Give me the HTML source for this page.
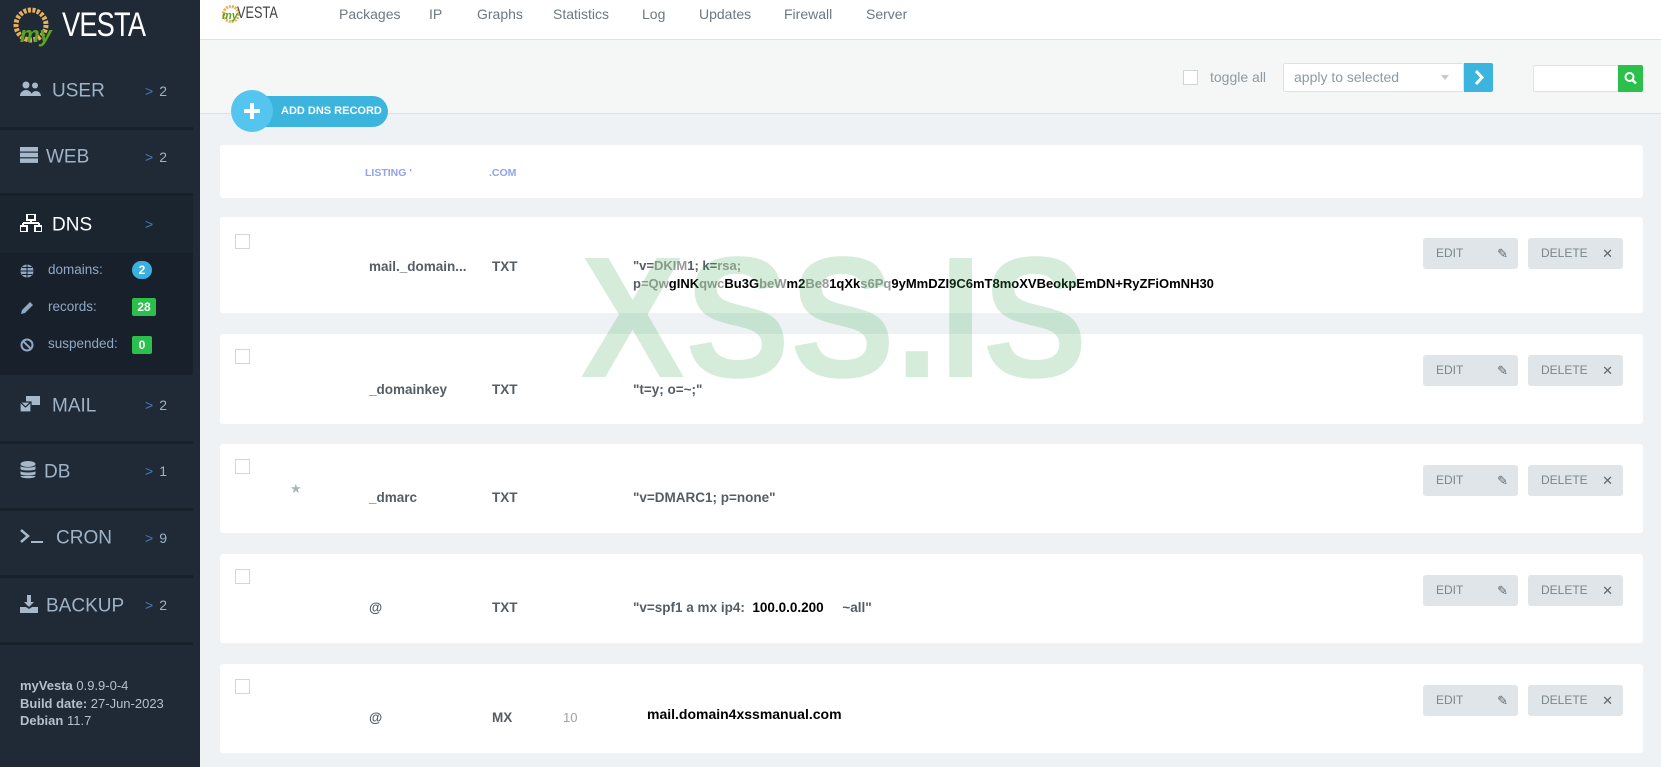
<!DOCTYPE html>
<html><head><meta charset="utf-8"><style>
*{box-sizing:border-box;margin:0;padding:0}
body{width:1661px;height:767px;overflow:hidden;background:#eef2f5;font-family:"Liberation Sans",sans-serif;position:relative}
.a{position:absolute}
#sb{left:0;top:0;width:200px;height:767px;background:#1f2a36}
.sep{position:absolute;left:0;width:193px;height:3px;background:#18212a}
.mi{position:absolute;left:20px;color:#9fb3c6;font-size:19px;line-height:20px;white-space:nowrap}
.mi .ic{display:inline-block;width:24px;margin-right:8px;vertical-align:middle}
.cnt{position:absolute;left:145px;color:#9fb3c6;font-size:14px}
.cnt b{color:#4a7bb0;font-weight:normal;margin-right:6px}
.sub{position:absolute;left:20px;color:#8fa8c4;font-size:13.5px}
.badge{position:absolute;left:132px;color:#fff;font-weight:bold;font-size:12px;text-align:center;line-height:18px;height:18px}
#top{left:200px;top:0;width:1461px;height:40px;background:#fff;border-bottom:1px solid #dde3e6}
.nav{position:absolute;top:6px;font-size:14px;color:#6d7880}
#tb{left:200px;top:40px;width:1461px;height:74px;background:#f5f7f7;border-bottom:1px solid #dce3e7}
.card{position:absolute;left:220px;width:1423px;background:#fff;border-radius:3px}
.cb{position:absolute;left:15px;top:8px;width:15px;height:15px;border:1px solid #d3d6d8;background:#fff}
.t{position:absolute;font-weight:bold;font-size:13.5px;color:#555d63;white-space:nowrap}
.btn{position:absolute;height:31px;background:#dfe5e8;border-radius:3px;font-size:12px;color:#7b868d;line-height:31px;padding-left:13px}
.btn span{position:absolute;right:10px;top:0;color:#5f686e;font-size:13px}
</style></head><body>
<div id="sb" class="a">
 <svg class="a" style="left:12px;top:6px" width="50" height="40" viewBox="0 0 50 40"><circle cx="19" cy="19" r="15" fill="none" stroke="#e7b15a" stroke-width="5" stroke-dasharray="3 1.5"/></svg>
 <div class="a" style="left:20px;top:22px;color:#5aa520;font-size:22px;font-style:italic;font-weight:bold">my</div>
 <div class="a" style="left:62px;top:6px;color:#fff;font-size:34px;letter-spacing:-1px;transform:scaleX(0.8);transform-origin:left">VESTA</div>

 <div class="mi" style="top:81px"><span class="ic"><svg width="22" height="16" viewBox="0 0 22 16"><circle cx="6" cy="4" r="3.5" fill="#a6b8c9"/><circle cx="15" cy="4.5" r="3" fill="#a6b8c9"/><path d="M0 15a6 6 0 0 1 12 0zM11 15a5 5 0 0 1 10 0z" fill="#a6b8c9"/></svg></span>USER</div><div class="cnt" style="top:83px"><b>&gt;</b>2</div>
 <div class="sep" style="top:127px"></div>
 <div class="mi" style="top:147px"><span class="ic" style="width:18px;margin-right:8px"><svg width="18" height="16" viewBox="0 0 18 16"><rect y="0" width="18" height="4.5" fill="#a6b8c9"/><rect y="5.7" width="18" height="4.5" fill="#a6b8c9"/><rect y="11.4" width="18" height="4.5" fill="#a6b8c9"/></svg></span>WEB</div><div class="cnt" style="top:149px"><b>&gt;</b>2</div>
 <div class="sep" style="top:193px"></div>
 <div class="a" style="left:0;top:196px;width:193px;height:57px;background:#1b2530"></div>
 <div class="a" style="left:0;top:253px;width:193px;height:122px;background:#18212b"></div>
 <div class="mi" style="top:214px;color:#fff"><span class="ic"><svg width="22" height="18" viewBox="0 0 22 18"><rect x="7" y="0" width="8" height="6" fill="none" stroke="#fff" stroke-width="2"/><path d="M11 6v3M3 9h16M3 9v3M19 9v3" stroke="#fff" stroke-width="2"/><rect x="0" y="12" width="7" height="6" fill="none" stroke="#fff" stroke-width="2"/><rect x="15" y="12" width="7" height="6" fill="none" stroke="#fff" stroke-width="2"/></svg></span>DNS</div><div class="cnt" style="top:216px"><b>&gt;</b></div>
 <svg class="a" style="left:20px;top:264px" width="14" height="14" viewBox="0 0 14 14"><circle cx="7" cy="7" r="6.5" fill="#8fa8c4"/><path d="M0.5 7h13M7 0.5v13M2 3.5h10M2 10.5h10" stroke="#18212b" stroke-width="1"/></svg>
 <div class="sub" style="left:48px;top:262px">domains:</div>
 <div class="badge" style="top:261px;width:20px;border-radius:10px;background:#3ab0e0">2</div>
 <svg class="a" style="left:20px;top:301px" width="14" height="14" viewBox="0 0 14 14"><path d="M1 13l1-4 8-8 3 3-8 8z" fill="#8fa8c4"/></svg>
 <div class="sub" style="left:48px;top:299px">records:</div>
 <div class="badge" style="top:298px;width:24px;border-radius:2px;background:#2bbf4c">28</div>
 <svg class="a" style="left:20px;top:338px" width="14" height="14" viewBox="0 0 14 14"><circle cx="7" cy="7" r="5.5" fill="none" stroke="#8fa8c4" stroke-width="2"/><path d="M3 3l8 8" stroke="#8fa8c4" stroke-width="2"/></svg>
 <div class="sub" style="left:48px;top:336px">suspended:</div>
 <div class="badge" style="top:336px;width:20px;border-radius:2px;background:#2bbf4c">0</div>
 <div class="mi" style="top:395px"><span class="ic"><svg width="20" height="18" viewBox="0 0 20 18"><rect x="6" y="1" width="14" height="9" fill="#a6b8c9"/><rect x="0" y="7" width="11" height="10" fill="#a6b8c9" stroke="#1f2a36" stroke-width="1.2"/><path d="M0 7l5.5 5 5.5-5" stroke="#1f2a36" fill="none" stroke-width="1.2"/></svg></span>MAIL</div><div class="cnt" style="top:397px"><b>&gt;</b>2</div>
 <div class="sep" style="top:441px"></div>
 <div class="mi" style="top:461px"><span class="ic" style="width:16px"><svg width="16" height="18" viewBox="0 0 16 18"><ellipse cx="8" cy="3" rx="7.5" ry="3" fill="#a6b8c9"/><path d="M0.5 5v3c0 2 15 2 15 0V5c0 2-15 2-15 0zM0.5 10v3c0 2 15 2 15 0v-3c0 2-15 2-15 0zM0.5 15c0 3 15 3 15 0" fill="#a6b8c9"/></svg></span>DB</div><div class="cnt" style="top:463px"><b>&gt;</b>1</div>
 <div class="sep" style="top:508px"></div>
 <div class="mi" style="top:528px"><span class="ic" style="margin-right:12px"><svg width="24" height="16" viewBox="0 0 24 16"><path d="M1 2l7 6-7 6" stroke="#a6b8c9" stroke-width="2.5" fill="none"/><path d="M11 14h12" stroke="#a6b8c9" stroke-width="2"/></svg></span>CRON</div><div class="cnt" style="top:530px"><b>&gt;</b>9</div>
 <div class="sep" style="top:575px"></div>
 <div class="mi" style="top:595px"><span class="ic" style="width:18px"><svg width="18" height="18" viewBox="0 0 18 18"><path d="M7 0h4v7h3l-5 5-5-5h3z" fill="#a6b8c9"/><path d="M0 12h6l3 2 3-2h6v6H0z" fill="#a6b8c9"/></svg></span>BACKUP</div><div class="cnt" style="top:597px"><b>&gt;</b>2</div>
 <div class="sep" style="top:642px"></div>
 <div class="a" style="left:20px;top:677px;color:#b3c0cb;font-size:13px;line-height:17.5px"><b>myVesta</b> 0.9.9-0-4<br><b>Build date:</b> 27-Jun-2023<br><b>Debian</b> 11.7</div>
</div>

<div id="top" class="a">
 <svg class="a" style="left:21px;top:4px" width="22" height="22" viewBox="0 0 22 22"><circle cx="10" cy="10" r="7.5" fill="none" stroke="#e7b15a" stroke-width="3" stroke-dasharray="2 1"/></svg>
 <div class="a" style="left:22px;top:10px;color:#5aa520;font-size:11px;font-style:italic;font-weight:bold">my</div>
 <div class="a" style="left:37px;top:3px;color:#444;font-size:17px;transform:scaleX(0.75);transform-origin:left">VESTA</div>
 <div class="nav" style="left:139px">Packages</div>
 <div class="nav" style="left:229px">IP</div>
 <div class="nav" style="left:277px">Graphs</div>
 <div class="nav" style="left:353px">Statistics</div>
 <div class="nav" style="left:442px">Log</div>
 <div class="nav" style="left:499px">Updates</div>
 <div class="nav" style="left:584px">Firewall</div>
 <div class="nav" style="left:666px">Server</div>
</div>
<div id="tb" class="a"></div>
<div class="a" style="left:1183px;top:70px;width:15px;height:15px;border:1px solid #cfd4d7;background:#fff"></div>
<div class="a" style="left:1210px;top:69px;font-size:14px;color:#8d9aa2">toggle all</div>
<div class="a" style="left:1283px;top:63px;width:181px;height:29px;background:#fff;border:1px solid #dde2e5;border-radius:2px;font-size:14px;color:#8d9aa2;padding:5px 10px">apply to selected<span style="position:absolute;right:14px;top:11px;border:4px solid transparent;border-top:5px solid #c5cacd"></span></div>
<div class="a" style="left:1464px;top:63px;width:29px;height:29px;background:#3bb4de;border-radius:0 2px 2px 0"><svg width="29" height="29" viewBox="0 0 29 29"><path d="M12 8l6 6.5-6 6.5" stroke="#fff" stroke-width="3" fill="none"/></svg></div>
<div class="a" style="left:1533px;top:65px;width:86px;height:27px;background:#fff;border:1px solid #dde2e5;border-radius:2px"></div>
<div class="a" style="left:1618px;top:65px;width:25px;height:27px;background:#2bbf4c;border-radius:0 2px 2px 0"><svg width="25" height="27" viewBox="0 0 25 27"><circle cx="11.5" cy="12" r="4" fill="none" stroke="#fff" stroke-width="2"/><path d="M14.5 15l3.5 3.5" stroke="#fff" stroke-width="2.5"/></svg></div>

<div class="a" style="left:246px;top:96px;width:142px;height:31px;background:#3bb4de;border-radius:16px"></div>
<div class="a" style="left:231px;top:90px;width:42px;height:42px;background:#53c5ee;border-radius:50%"><svg width="42" height="42" viewBox="0 0 42 42"><path d="M21 13v16M13 21h16" stroke="#fff" stroke-width="4"/></svg></div>
<div class="a" style="left:281px;top:105px;color:#fff;font-weight:bold;font-size:11px">ADD DNS RECORD</div>

<div class="card" style="top:145px;height:53px">
 <div class="t" style="left:145px;top:22px;color:#8fa3ea;font-size:10.5px">LISTING '</div>
 <div class="t" style="left:269px;top:22px;color:#8fa3ea;font-size:10.5px">.COM</div>
</div>

<div class="card" style="top:217px;height:96px">
 <div class="cb" style="top:17px"></div>
 <div class="t" style="left:149px;top:42px">mail._domain...</div>
 <div class="t" style="left:272px;top:42px">TXT</div>
 <div class="t" style="left:413px;top:41px;font-size:13px">"v=<span style="color:#999">DKIM</span>1; k=<span style="color:#999">rsa;</span></div>
 <div class="t" style="left:413px;top:59px;font-size:13px;color:#000"><span style="color:#555d63">p</span><span style="color:#999">=Qw</span>gINK<span style="color:#999">qwc</span>Bu3G<span style="color:#999">beW</span>m2<span style="color:#999">Be8</span>1qXk<span style="color:#999">s6Pq</span>9yMmDZI9C6mT8moXVBeokpEmDN+RyZFiOmNH30</div>
 <div class="btn" style="left:1203px;top:21px;width:95px">EDIT<span>&#9998;</span></div>
 <div class="btn" style="left:1308px;top:21px;width:95px">DELETE<span>&#10005;</span></div>
</div>
<div class="card" style="top:334px;height:90px">
 <div class="cb" style="top:15px"></div>
 <div class="t" style="left:149px;top:48px">_domainkey</div>
 <div class="t" style="left:272px;top:48px">TXT</div>
 <div class="t" style="left:413px;top:48px">"t=y; o=~;"</div>
 <div class="btn" style="left:1203px;top:21px;width:95px">EDIT<span>&#9998;</span></div>
 <div class="btn" style="left:1308px;top:21px;width:95px">DELETE<span>&#10005;</span></div>
</div>
<div class="card" style="top:444px;height:89px">
 <div class="cb" style="top:15px"></div>
 <div class="a" style="left:70px;top:37px;color:#aab3b8;font-size:13px">&#9733;</div>
 <div class="t" style="left:149px;top:46px">_dmarc</div>
 <div class="t" style="left:272px;top:46px">TXT</div>
 <div class="t" style="left:413px;top:46px">"v=DMARC1; p=none"</div>
 <div class="btn" style="left:1203px;top:21px;width:95px">EDIT<span>&#9998;</span></div>
 <div class="btn" style="left:1308px;top:21px;width:95px">DELETE<span>&#10005;</span></div>
</div>
<div class="card" style="top:554px;height:89px">
 <div class="cb" style="top:15px"></div>
 <div class="t" style="left:149px;top:46px">@</div>
 <div class="t" style="left:272px;top:46px">TXT</div>
 <div class="t" style="left:413px;top:46px">"v=spf1 a mx ip4: &nbsp;<span style="color:#000">100.0.0.200</span> &nbsp; &nbsp; ~all"</div>
 <div class="btn" style="left:1203px;top:21px;width:95px">EDIT<span>&#9998;</span></div>
 <div class="btn" style="left:1308px;top:21px;width:95px">DELETE<span>&#10005;</span></div>
</div>
<div class="card" style="top:664px;height:89px">
 <div class="cb" style="top:15px"></div>
 <div class="t" style="left:149px;top:46px">@</div>
 <div class="t" style="left:272px;top:46px">MX</div>
 <div class="a" style="left:343px;top:46px;font-size:13px;color:#9aa69a">10</div>
 <div class="t" style="left:427px;top:42px;color:#000;font-size:14px">mail.domain4xssmanual.com</div>
 <div class="btn" style="left:1203px;top:21px;width:95px">EDIT<span>&#9998;</span></div>
 <div class="btn" style="left:1308px;top:21px;width:95px">DELETE<span>&#10005;</span></div>
</div>

<div class="a" style="left:580px;top:222px;font-size:173px;line-height:190px;font-weight:bold;color:rgba(60,170,80,0.22);white-space:nowrap;transform:scaleX(0.91);transform-origin:left">XSS.IS</div>
</body></html>
